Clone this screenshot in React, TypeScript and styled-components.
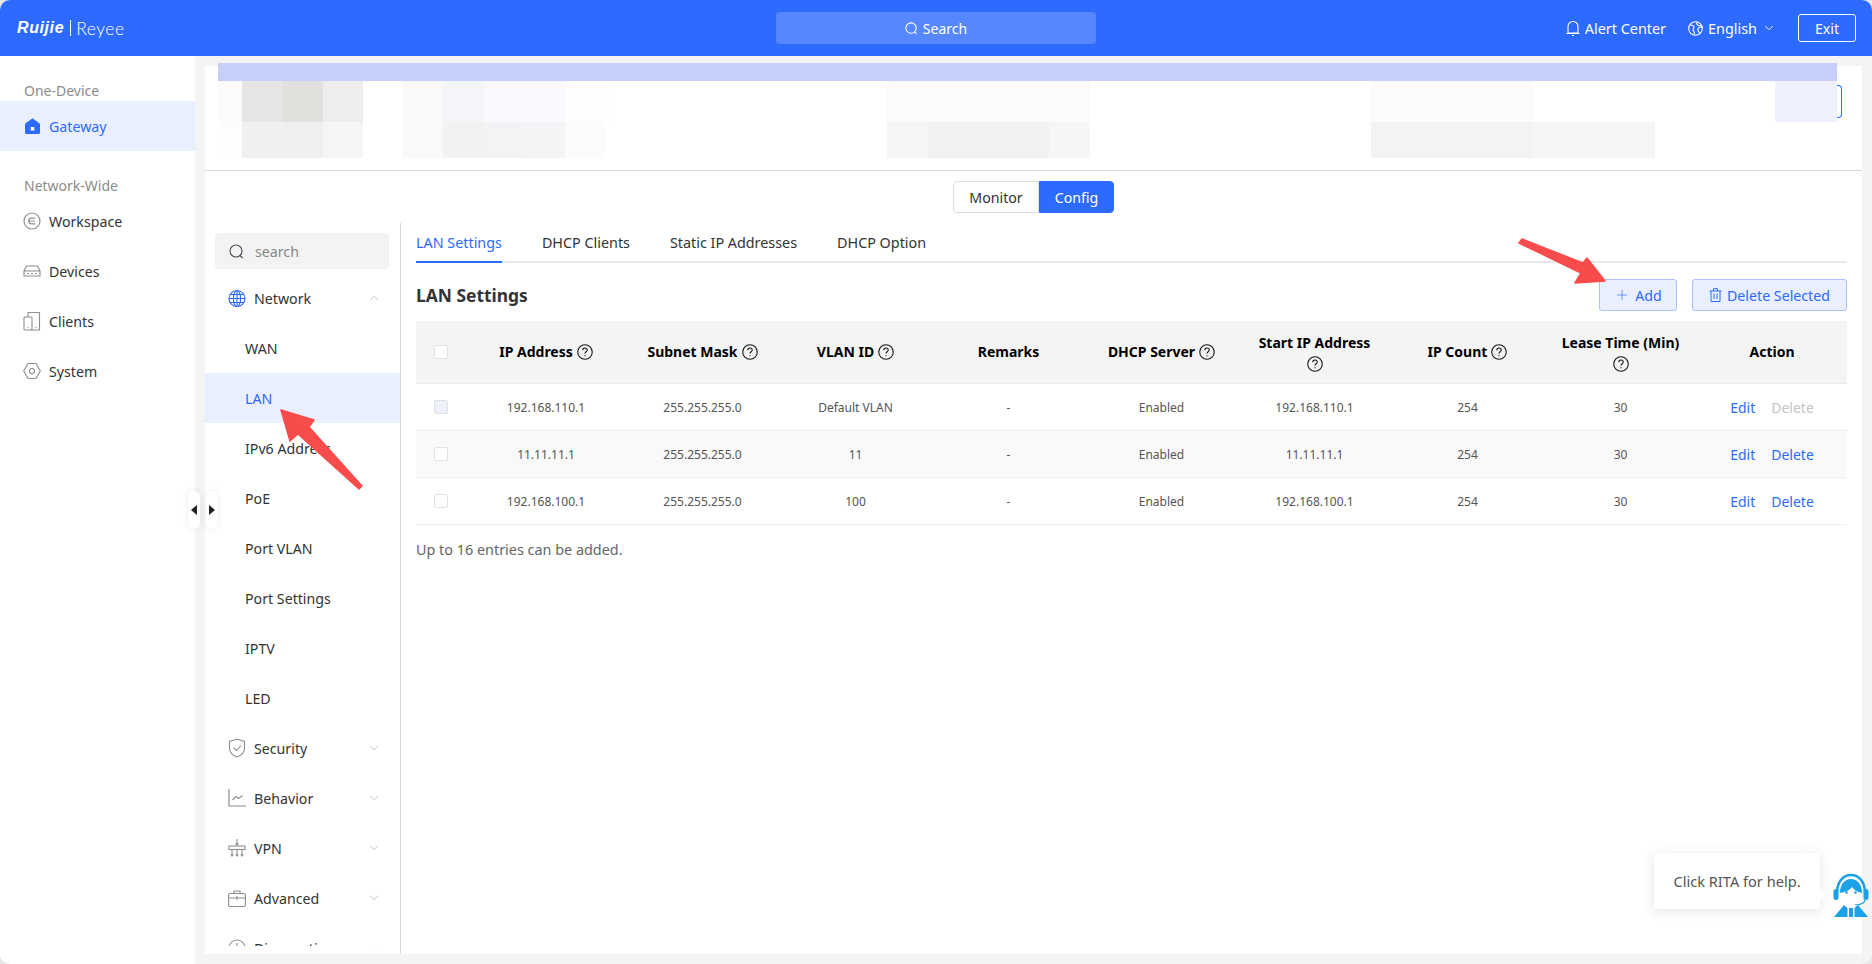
import React from 'react';
import styled, {createGlobalStyle} from 'styled-components';
import {Plus, ChevronDown, ChevronUp} from 'lucide-react';

const BLUE = '#2d6aff';
const COLS = '50px 160px repeat(7, 153px) 150px';

const GlobalStyle = createGlobalStyle`
	html, body {
		margin: 0;
		padding: 0;
		background: #e6e6e6;
		font-family: "Noto Sans", "Open Sans", sans-serif;
		font-size: 14.2px;
		color: #333;
	}
	* {
		box-sizing: border-box;
	}
`;

const Shell = styled.div`
	position: relative;
	width: 1872px;
	height: 964px;
	display: flex;
	flex-direction: column;
	background: #f4f4f4;
	border-radius: 10px;
	overflow: hidden;
`;

const TopBar = styled.header`
	height: 56px;
	flex: none;
	display: grid;
	grid-template-columns: 1fr 320px 1fr;
	align-items: center;
	background: ${BLUE};
	color: #fff;
`;

const Logo = styled.div`
	display: flex;
	align-items: center;
	padding-left: 17px;
	color: #fff;
`;

const LogoBrand = styled.span`
	font-family: "Liberation Sans", sans-serif;
	font-size: 16px;
	font-weight: 700;
	font-style: italic;
	letter-spacing: 0.6px;
`;

const LogoRule = styled.span`
	width: 1px;
	height: 16px;
	margin: 0 5px 0 6px;
	background: #fff;
`;

const LogoProduct = styled.span`
	font-family: "Lato", sans-serif;
	font-size: 17.5px;
	font-weight: 300;
	letter-spacing: 0.5px;
`;

const SearchPill = styled.div`
	height: 32px;
	display: flex;
	align-items: center;
	justify-content: center;
	gap: 5px;
	background: #5787ff;
	border-radius: 4px;
	font-size: 14px;
`;

const TopActions = styled.div`
	display: flex;
	align-items: center;
	justify-content: flex-end;
	padding-right: 16px;
`;

const TopAction = styled.div`
	display: flex;
	align-items: center;
	gap: 5px;
	margin-right: 22px;
	font-size: 14.4px;
`;

const ExitButton = styled.button`
	width: 58px;
	height: 28px;
	background: transparent;
	border: 1px solid #fff;
	border-radius: 3px;
	color: #fff;
	font: inherit;
	padding: 0;
`;

const Body = styled.div`
	flex: 1;
	min-height: 0;
	display: flex;
`;

const Sidebar = styled.nav`
	width: 195px;
	flex: none;
	padding-top: 25px;
	background: #fff;
`;

const SideLabel = styled.div`
	height: 20px;
	line-height: 20px;
	padding-left: 24px;
	color: #8c8c8c;
	font-size: 14px;
`;

const SideGroup = styled.div`
	margin-bottom: 25px;
`;

const SideItem = styled.div<{$active?: boolean}>`
	height: 50px;
	display: flex;
	align-items: center;
	gap: 8px;
	padding-left: 23px;
	background: ${p => (p.$active ? '#e9effe' : 'transparent')};
	color: ${p => (p.$active ? BLUE : '#333')};
`;

const IconSlot = styled.span`
	width: 18px;
	height: 18px;
	flex: none;
	display: flex;
	align-items: center;
	justify-content: center;
`;

const MainArea = styled.main`
	flex: 1;
	min-width: 0;
	padding: 10px;
	display: flex;
`;

const Panel = styled.section`
	flex: 1;
	min-width: 0;
	display: flex;
	flex-direction: column;
	background: #fff;
`;

const Summary = styled.div`
	flex: none;
	height: 105px;
	padding: 0 20px 0 13px;
	border-bottom: 1px solid #d9d9d9;
`;

const SummaryBar = styled.div`
	height: 18px;
	margin: -3px 5px 0 0;
	background: #c5cffa;
	position: relative;
`;

const MosaicRow = styled.div<{$h: number}>`
	display: flex;
	align-items: center;
	height: ${p => p.$h}px;
`;

const MosaicCell = styled.div<{$w: number; $c: string}>`
	width: ${p => p.$w}px;
	height: 100%;
	flex: none;
	background: ${p => p.$c};
`;

const ButtonEdge = styled.div`
	width: 5px;
	height: 33px;
	border: 1px solid ${BLUE};
	border-left: none;
	border-radius: 0 4px 4px 0;
`;

const SegmentBar = styled.div`
	flex: none;
	height: 52px;
	display: flex;
	justify-content: center;
	padding-top: 10px;
`;

const Segment = styled.button<{$on?: boolean; $w: number; $side: 'l' | 'r'}>`
	width: ${p => p.$w}px;
	height: 32px;
	padding: 0;
	font: inherit;
	background: ${p => (p.$on ? BLUE : '#fff')};
	color: ${p => (p.$on ? '#fff' : '#333')};
	border: 1px solid ${p => (p.$on ? BLUE : '#dcdce4')};
	border-radius: ${p => (p.$side === 'l' ? '4px 0 0 4px' : '0 4px 4px 0')};
`;

const Lower = styled.div`
	flex: 1;
	min-height: 0;
	display: flex;
`;

const MenuColumn = styled.aside`
	width: 196px;
	flex: none;
	padding-bottom: 8px;
	border-right: 1px solid #d9d9d9;
`;

const MenuClip = styled.div`
	height: 100%;
	padding-top: 10px;
	overflow: hidden;
`;

const MenuSearch = styled.div`
	height: 36px;
	margin: 0 11px 4px 10px;
	padding-left: 14px;
	display: flex;
	align-items: center;
	gap: 11px;
	background: #f3f3f3;
	border-radius: 4px;
	color: #888;
`;

const MenuGroup = styled.div`
	height: 50px;
	display: flex;
	align-items: center;
	gap: 8px;
	padding: 0 19px 0 23px;
	color: #333;
`;

const MenuGroupName = styled.span`
	flex: 1;
`;

const MenuLeaf = styled.div<{$active?: boolean}>`
	height: 50px;
	display: flex;
	align-items: center;
	padding-left: 40px;
	background: ${p => (p.$active ? '#e9effe' : 'transparent')};
	color: ${p => (p.$active ? BLUE : '#333')};
`;

const Content = styled.div`
	flex: 1;
	min-width: 0;
	padding: 0 15px;
`;

const Tabs = styled.div`
	height: 40px;
	display: flex;
	gap: 40px;
	border-bottom: 2px solid #e6e6ec;
`;

const Tab = styled.div<{$active?: boolean}>`
	height: 40px;
	line-height: 39px;
	font-size: 14.35px;
	color: ${p => (p.$active ? BLUE : '#333')};
	border-bottom: 2px solid ${p => (p.$active ? BLUE : 'transparent')};
`;

const TitleRow = styled.div`
	height: 32px;
	margin: 16px 0 10px;
	display: flex;
	align-items: center;
	gap: 15px;
`;

const Title = styled.h2`
	flex: 1;
	margin: 0;
	font-size: 17.4px;
	font-weight: 700;
	color: #333;
`;

const GhostButton = styled.button<{$w: number}>`
	width: ${p => p.$w}px;
	height: 32px;
	padding: 0;
	display: flex;
	align-items: center;
	justify-content: center;
	gap: 5px;
	background: #e9effe;
	border: 1px solid #a9c2ff;
	border-radius: 3px;
	color: ${BLUE};
	font: inherit;
`;

const HeadRow = styled.div`
	display: grid;
	grid-template-columns: ${COLS};
	height: 63px;
	background: #f4f4f4;
	border-bottom: 1px solid #ececf2;
	color: #000;
	font-weight: 700;
	font-size: 14px;
`;

const HeadCell = styled.div<{$stack?: boolean}>`
	display: flex;
	flex-direction: ${p => (p.$stack ? 'column' : 'row')};
	align-items: center;
	justify-content: center;
	gap: ${p => (p.$stack ? '3px' : '4px')};
	line-height: 20px;
	white-space: nowrap;
`;

const DataRow = styled.div<{$alt?: boolean}>`
	display: grid;
	grid-template-columns: ${COLS};
	height: 47px;
	background: ${p => (p.$alt ? '#f9f9f9' : '#fff')};
	border-bottom: 1px solid #ececf2;
	font-size: 12px;
	color: #555;
`;

const DataCell = styled.div`
	display: flex;
	align-items: center;
	justify-content: center;
`;

const CheckCell = styled.div`
	display: flex;
	align-items: center;
	justify-content: flex-end;
	padding-right: 18px;
	padding-left: 18px;
`;

const CheckBox = styled.span<{$disabled?: boolean}>`
	width: 14px;
	height: 14px;
	flex: none;
	background: ${p => (p.$disabled ? '#eef1fa' : '#fff')};
	border: 1px solid #e0e0e6;
	border-radius: 2px;
`;

const ActionLink = styled.span<{$disabled?: boolean}>`
	font-size: 14px;
	color: ${p => (p.$disabled ? '#c4c4c4' : BLUE)};
`;

const ActionCell = styled(DataCell)`
	gap: 16px;
`;

const Hint = styled.p`
	margin: 15px 0 0;
	line-height: 20px;
	font-size: 14.4px;
	color: #666;
`;

const Handle = styled.div<{$left: number}>`
	position: absolute;
	left: ${p => p.$left}px;
	top: 491px;
	width: 12px;
	height: 38px;
	display: flex;
	align-items: center;
	justify-content: center;
	background: #fff;
	border-radius: 6px;
	box-shadow: 0 0 6px rgba(0, 0, 0, 0.08);
`;

const HandleArrow = styled.span<{$dir: 'l' | 'r'}>`
	width: 0;
	height: 0;
	border-top: 5px solid transparent;
	border-bottom: 5px solid transparent;
	${p => (p.$dir === 'l' ? 'border-right: 6px solid #222;' : 'border-left: 6px solid #222;')}
`;

const HelpBubble = styled.div`
	position: absolute;
	left: 1654px;
	top: 853px;
	width: 166px;
	height: 56px;
	display: flex;
	align-items: center;
	justify-content: center;
	background: #fff;
	border-radius: 3px;
	box-shadow: 0 2px 12px rgba(60, 60, 90, 0.14);
	font-size: 14.6px;
	color: #555;

	&::after {
		content: '';
		position: absolute;
		right: -4px;
		top: 37px;
		width: 8px;
		height: 8px;
		background: #fff;
		transform: rotate(45deg);
	}
`;

const Avatar = styled.svg`
	position: absolute;
	left: 1833px;
	top: 873px;
`;

const ArrowMark = styled.svg<{$left: number; $top: number}>`
	position: absolute;
	left: ${p => p.$left}px;
	top: ${p => p.$top}px;
	pointer-events: none;
`;

const GRAY = '#8e8e8e';

const IconHome = () => (
	<svg width="15" height="16" viewBox="0 0 15 16">
		<path d="M7.5 0.3 14.3 5.2c.4.3.7.8.7 1.3V14.500c0 .8-.7 1.500-1.500 1.500H1.500C.7 16 0 15.300 0 14.500V6.500c0-.5.3-1 .7-1.300Z" fill={BLUE} />
		<rect x="5.700" y="9" width="3.600" height="3.600" fill="#fff" />
	</svg>
);

const IconWorkspace = () => (
	<svg width="18" height="18" viewBox="0 0 18 18" fill="none" stroke={GRAY} strokeWidth="1.200">
		<circle cx="9" cy="9" r="8" />
		<path d="M12.200 6.200H8.500a2.800 2.800 0 0 0 0 5.600h3.700M6.500 9h5.500" />
	</svg>
);

const IconDevices = () => (
	<svg width="18" height="12" viewBox="0 0 18 12" fill="none" stroke={GRAY} strokeWidth="1.100">
		<path d="M3.500 1h11l2.500 5v5H1V6ZM1 6h16" />
		<path d="M4 8.500h2M8 8.500h2M12 8.500h2" />
	</svg>
);

const IconClients = () => (
	<svg width="18" height="20" viewBox="0 0 18 20" fill="none" stroke={GRAY} strokeWidth="1.100">
		<path d="M5 6V1.500h11.500V19H8" />
		<rect x="1" y="6" width="8" height="13" rx="1" />
		<path d="M4.500 16.500h1M12.500 16.500h1" />
	</svg>
);

const IconSystem = () => (
	<svg width="18" height="18" viewBox="0 0 18 18" fill="none" stroke={GRAY} strokeWidth="1.100">
		<path d="M5 1.500h8L17.300 9 13 16.500H5L.7 9Z" />
		<circle cx="9" cy="9" r="2.500" />
	</svg>
);

const IconSearch = ({color, size = 15}: {color: string; size?: number}) => (
	<svg width={size} height={size} viewBox="0 0 15 15" fill="none" stroke={color} strokeWidth="1.200">
		<circle cx="7" cy="7" r="6" />
		<path d="M11 11.500 13.500 14" />
	</svg>
);

const IconBell = () => (
	<svg width="14" height="16" viewBox="0 0 14 16" fill="none" stroke="#fff" strokeWidth="1.100">
		<path d="M2 13V6.500a5 5 0 0 1 10 0V13ZM.5 13.500h13M6 15.500h2" />
	</svg>
);

const IconEarth = () => (
	<svg width="15" height="15" viewBox="0 0 15 15" fill="none" stroke="#fff" strokeWidth="1.100">
		<circle cx="7.500" cy="7.500" r="6.800" />
		<path d="M2 3.500c2 1 3.500.5 4 2s-1.500 2-1 3.500 1.500 1 1.500 4.500M9 1c-1 2 0 3 1.500 3.500S14 4 14 6c-1.500.5-3 0-4 1.500s.5 3 2 5" />
	</svg>
);

const IconGlobe = () => (
	<svg width="18" height="19" viewBox="0 0 18 19" fill="none" stroke={BLUE} strokeWidth="1.100">
		<circle cx="9" cy="9.500" r="8" />
		<ellipse cx="9" cy="9.500" rx="3.600" ry="8" />
		<path d="M9 1.500v16M1 9.500h16M2 5.500h14M2 13.500h14" />
	</svg>
);

const IconShield = () => (
	<svg width="18" height="20" viewBox="0 0 18 20" fill="none" stroke={GRAY} strokeWidth="1.100">
		<path d="M9 1 16.500 3.500V10c0 4.500-3.500 7.500-7.500 9-4-1.500-7.500-4.500-7.500-9V3.500Z" />
		<path d="M5.500 9.500 8.500 12.500 13 7.500" />
	</svg>
);

const IconChart = () => (
	<svg width="18" height="18" viewBox="0 0 18 18" fill="none" stroke={GRAY} strokeWidth="1.200">
		<path d="M1 0v17h17" />
		<path d="M4.500 11 8 7.500 10.500 9.500 14.500 6.500" />
	</svg>
);

const IconVpn = () => (
	<svg width="18" height="18" viewBox="0 0 18 18" fill="none" stroke={GRAY} strokeWidth="1.100">
		<path d="M9 0v6M7.500 4.500 9 6l1.500-1.500" />
		<rect x="1" y="7" width="16" height="3.500" />
		<path d="M4 10.500V17M9 10.500V17M14 10.500V17M2.800 15.500 4 17l1.200-1.500M7.800 15.500 9 17l1.200-1.500M12.800 15.500 14 17l1.200-1.500" />
	</svg>
);

const IconBriefcase = () => (
	<svg width="18" height="17" viewBox="0 0 18 17" fill="none" stroke={GRAY} strokeWidth="1.100">
		<rect x="0.600" y="3.500" width="16.800" height="13" rx="1.500" />
		<path d="M6 3.500V1h6v2.500M.6 8h16.800M9 6v4M7.200 8H10.800" />
	</svg>
);

const IconGauge = () => (
	<svg width="18" height="18" viewBox="0 0 18 18" fill="none" stroke={GRAY} strokeWidth="1.100">
		<circle cx="9" cy="9" r="8" />
		<path d="M9 4v5l3 2" />
	</svg>
);

const IconHelp = () => (
	<svg width="16" height="16" viewBox="0 0 15 15" fill="none" stroke="#111" strokeWidth="1">
		<circle cx="7.500" cy="7.500" r="6.800" />
		<path d="M5.400 5.800c0-1.300 1-2.100 2.100-2.100s2.100.8 2.100 1.900c0 1.600-2.100 1.700-2.100 3.400" />
		<path d="M7.500 10.500v1" />
	</svg>
);

const IconTrash = () => (
	<svg width="13" height="14" viewBox="0 0 13 14" fill="none" stroke={BLUE} strokeWidth="1">
		<path d="M2 3v10.500h9V3M.5 3h12M4.500 3V.7h4V3M5 5.500v5.500M8 5.500v5.500" />
	</svg>
);

const sideIcon = (icon: React.ReactNode) => <IconSlot>{icon}</IconSlot>;

const mosaicTop: [number, string][] = [
	[24, '#fbfbfb'], [41, '#e5e5e4'], [40, '#e0e0dc'], [40, '#ededed'], [40, '#fff'],
	[40, '#f9f9f9'], [41, '#f4f5f8'], [81, '#fafafe'], [44, '#fefefe'], [278, '#fff'],
	[203, '#fbfbfb'], [281, '#fff'], [162, '#fbfbfb'], [242, '#fff'], [62, '#eff2fe'],
];

const mosaicBottom: [number, string][] = [
	[24, '#fdfdfd'], [41, '#f0f0ef'], [40, '#eeefee'], [40, '#f5f5f5'], [40, '#fff'],
	[40, '#f9f9f9'], [41, '#f2f2f1'], [41, '#f2f3f5'], [40, '#f4f4f7'], [41, '#fcfcfc'],
	[281, '#fff'], [41, '#f5f5f5'], [121, '#f1f1f1'], [41, '#f6f6f6'], [281, '#fff'],
	[122, '#f3f3f3'], [40, '#f3f3f6'], [81, '#f6f6f6'], [41, '#f5f5f5'],
];

const leaves = ['WAN', 'LAN', 'IPv6 Address', 'PoE', 'Port VLAN', 'Port Settings', 'IPTV', 'LED'];

const closedGroups: [string, React.ReactNode][] = [
	['Security', <IconShield />],
	['Behavior', <IconChart />],
	['VPN', <IconVpn />],
	['Advanced', <IconBriefcase />],
	['Diagnostics', <IconGauge />],
];

const tabs = ['LAN Settings', 'DHCP Clients', 'Static IP Addresses', 'DHCP Option'];

const rows = [
	{ip: '192.168.110.1', vlan: 'Default VLAN', start: '192.168.110.1', locked: true},
	{ip: '11.11.11.1', vlan: '11', start: '11.11.11.1', locked: false},
	{ip: '192.168.100.1', vlan: '100', start: '192.168.100.1', locked: false},
];

const App = () => {
	return (
		<>
			<GlobalStyle />
			<Shell>
				<TopBar>
					<Logo>
						<LogoBrand>Ruijie</LogoBrand>
						<LogoRule />
						<LogoProduct>Reyee</LogoProduct>
					</Logo>
					<SearchPill>
						<IconSearch color="#fff" size={13} />
						Search
					</SearchPill>
					<TopActions>
						<TopAction>
							<IconBell />
							Alert Center
						</TopAction>
						<TopAction>
							<IconEarth />
							English
							<ChevronDown size={14} strokeWidth={1.6} />
						</TopAction>
						<ExitButton>Exit</ExitButton>
					</TopActions>
				</TopBar>
				<Body>
					<Sidebar>
						<SideGroup>
							<SideLabel>One-Device</SideLabel>
							<SideItem $active>
								{sideIcon(<IconHome />)}
								Gateway
							</SideItem>
						</SideGroup>
						<SideGroup>
							<SideLabel>Network-Wide</SideLabel>
							<SideItem>{sideIcon(<IconWorkspace />)}Workspace</SideItem>
							<SideItem>{sideIcon(<IconDevices />)}Devices</SideItem>
							<SideItem>{sideIcon(<IconClients />)}Clients</SideItem>
							<SideItem>{sideIcon(<IconSystem />)}System</SideItem>
						</SideGroup>
					</Sidebar>
					<MainArea>
						<Panel>
							<Summary>
								<SummaryBar />
								<MosaicRow $h={41}>
									{mosaicTop.map(([w, c], i) => (
										<MosaicCell key={i} $w={w} $c={c} />
									))}
									<ButtonEdge />
								</MosaicRow>
								<MosaicRow $h={36}>
									{mosaicBottom.map(([w, c], i) => (
										<MosaicCell key={i} $w={w} $c={c} />
									))}
								</MosaicRow>
							</Summary>
							<SegmentBar>
								<Segment $w={86} $side="l">Monitor</Segment>
								<Segment $w={75} $side="r" $on>Config</Segment>
							</SegmentBar>
							<Lower>
								<MenuColumn>
									<MenuClip>
										<MenuSearch>
											<IconSearch color="#555" />
											search
										</MenuSearch>
										<MenuGroup>
											{sideIcon(<IconGlobe />)}
											<MenuGroupName>Network</MenuGroupName>
											<ChevronUp size={14} strokeWidth={1} color="#999" />
										</MenuGroup>
										{leaves.map(name => (
											<MenuLeaf key={name} $active={name === 'LAN'}>
												{name}
											</MenuLeaf>
										))}
										{closedGroups.map(([name, icon]) => (
											<MenuGroup key={name}>
												{sideIcon(icon)}
												<MenuGroupName>{name}</MenuGroupName>
												<ChevronDown size={14} strokeWidth={1} color="#999" />
											</MenuGroup>
										))}
									</MenuClip>
								</MenuColumn>
								<Content>
									<Tabs>
										{tabs.map((name, i) => (
											<Tab key={name} $active={i === 0}>
												{name}
											</Tab>
										))}
									</Tabs>
									<TitleRow>
										<Title>LAN Settings</Title>
										<GhostButton $w={78}>
											<Plus size={16} strokeWidth={1} />
											Add
										</GhostButton>
										<GhostButton $w={155}>
											<IconTrash />
											Delete Selected
										</GhostButton>
									</TitleRow>
									<HeadRow>
										<CheckCell>
											<CheckBox />
										</CheckCell>
										<HeadCell>IP Address <IconHelp /></HeadCell>
										<HeadCell>Subnet Mask <IconHelp /></HeadCell>
										<HeadCell>VLAN ID <IconHelp /></HeadCell>
										<HeadCell>Remarks</HeadCell>
										<HeadCell>DHCP Server <IconHelp /></HeadCell>
										<HeadCell $stack>Start IP Address <IconHelp /></HeadCell>
										<HeadCell>IP Count <IconHelp /></HeadCell>
										<HeadCell $stack>Lease Time (Min) <IconHelp /></HeadCell>
										<HeadCell>Action</HeadCell>
									</HeadRow>
									{rows.map((row, i) => (
										<DataRow key={row.ip} $alt={i === 1}>
											<CheckCell>
												<CheckBox $disabled={row.locked} />
											</CheckCell>
											<DataCell>{row.ip}</DataCell>
											<DataCell>255.255.255.0</DataCell>
											<DataCell>{row.vlan}</DataCell>
											<DataCell>-</DataCell>
											<DataCell>Enabled</DataCell>
											<DataCell>{row.start}</DataCell>
											<DataCell>254</DataCell>
											<DataCell>30</DataCell>
											<ActionCell>
												<ActionLink>Edit</ActionLink>
												<ActionLink $disabled={row.locked}>Delete</ActionLink>
											</ActionCell>
										</DataRow>
									))}
									<Hint>Up to 16 entries can be added.</Hint>
								</Content>
							</Lower>
						</Panel>
					</MainArea>
				</Body>
				<Handle $left={188}>
					<HandleArrow $dir="l" />
				</Handle>
				<Handle $left={206}>
					<HandleArrow $dir="r" />
				</Handle>
				<ArrowMark $left={276} $top={405} width="90" height="88" viewBox="0 0 90 88">
					<path d="M5 5 38 15 33 22 86 81 83 84 22 29 14 36Z" fill="#f84c4c" stroke="#f84c4c" strokeWidth="1.500" strokeLinejoin="round" />
				</ArrowMark>
				<ArrowMark $left={1515} $top={235} width="95" height="52" viewBox="0 0 95 52">
					<path d="M4 8 7 4 68 28 72 23 90 46 60 48 66 38Z" fill="#f84c4c" stroke="#f84c4c" strokeWidth="1.500" strokeLinejoin="round" />
				</ArrowMark>
				<HelpBubble>Click RITA for help.</HelpBubble>
				<Avatar width="36" height="44" viewBox="0 0 36 44">
					<path d="M4 20C4 9 10 2 18 2s14 7 14 18" fill="none" stroke="#1ba1e8" strokeWidth="2.500" />
					<path d="M7 20C7 11 12 6 18 6s11 5 11 14c-5-1-8-3-10-6-2 3-6 5-12 6Z" fill="#1ba1e8" />
					<rect x="0.500" y="16" width="5" height="11" rx="2.500" fill="#1ba1e8" />
					<rect x="30.500" y="16" width="5" height="11" rx="2.500" fill="#1ba1e8" />
					<circle cx="13.500" cy="19.500" r="1.300" fill="#1ba1e8" />
					<circle cx="22.500" cy="19.500" r="1.300" fill="#1ba1e8" />
					<path d="M32 27c0 3-5 5-10 5" fill="none" stroke="#1ba1e8" strokeWidth="1.200" />
					<path d="M11 32 1 44h13.500V35Z" fill="#1ba1e8" />
					<path d="M25 32 35 44H21.500V35Z" fill="#1ba1e8" />
					<rect x="16" y="35" width="4" height="9" fill="#1ba1e8" />
				</Avatar>
			</Shell>
		</>
	);
};

export default App;
